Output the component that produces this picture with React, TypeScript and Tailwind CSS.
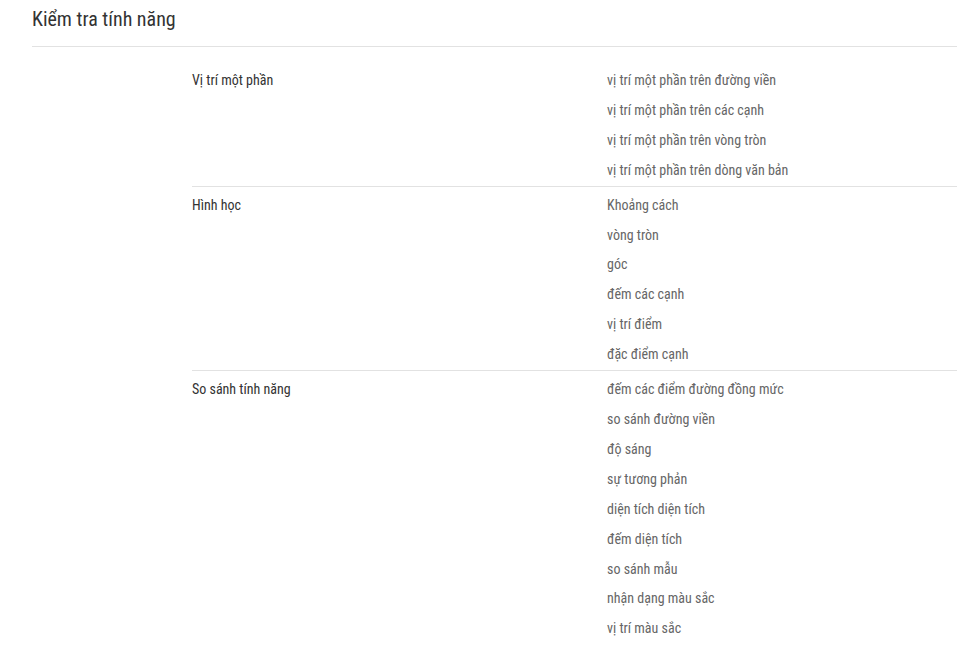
const groups: { name: string; items: string[] }[] = [
  {
    name: 'Vị trí một phần',
    items: [
      'vị trí một phần trên đường viền',
      'vị trí một phần trên các cạnh',
      'vị trí một phần trên vòng tròn',
      'vị trí một phần trên dòng văn bản',
    ],
  },
  {
    name: 'Hình học',
    items: ['Khoảng cách', 'vòng tròn', 'góc', 'đếm các cạnh', 'vị trí điểm', 'đặc điểm cạnh'],
  },
  {
    name: 'So sánh tính năng',
    items: [
      'đếm các điểm đường đồng mức',
      'so sánh đường viền',
      'độ sáng',
      'sự tương phản',
      'diện tích diện tích',
      'đếm diện tích',
      'so sánh mẫu',
      'nhận dạng màu sắc',
      'vị trí màu sắc',
    ],
  },
];

export default function App() {
  return (
    <div className="min-h-screen bg-white pl-8 font-['Roboto',sans-serif] [font-stretch:condensed]">
      <h1 className="pt-[5px] pb-[13px] text-[20px] leading-[28px] text-[#333] border-b border-[#e2e2e2]">
        Kiểm tra tính năng
      </h1>
      <div className="mt-[15px] pl-[160px] text-[14px] leading-[29.9px]">
        {groups.map((g, i) => (
          <div
            key={g.name}
            className={`flex pt-[4px] ${i < groups.length - 1 ? 'border-b border-[#e2e2e2]' : ''}`}
          >
            <div className="w-[415px] shrink-0 text-[#333]">{g.name}</div>
            <ul className="text-[#666]">
              {g.items.map((it) => (
                <li key={it}>{it}</li>
              ))}
            </ul>
          </div>
        ))}
      </div>
    </div>
  );
}
